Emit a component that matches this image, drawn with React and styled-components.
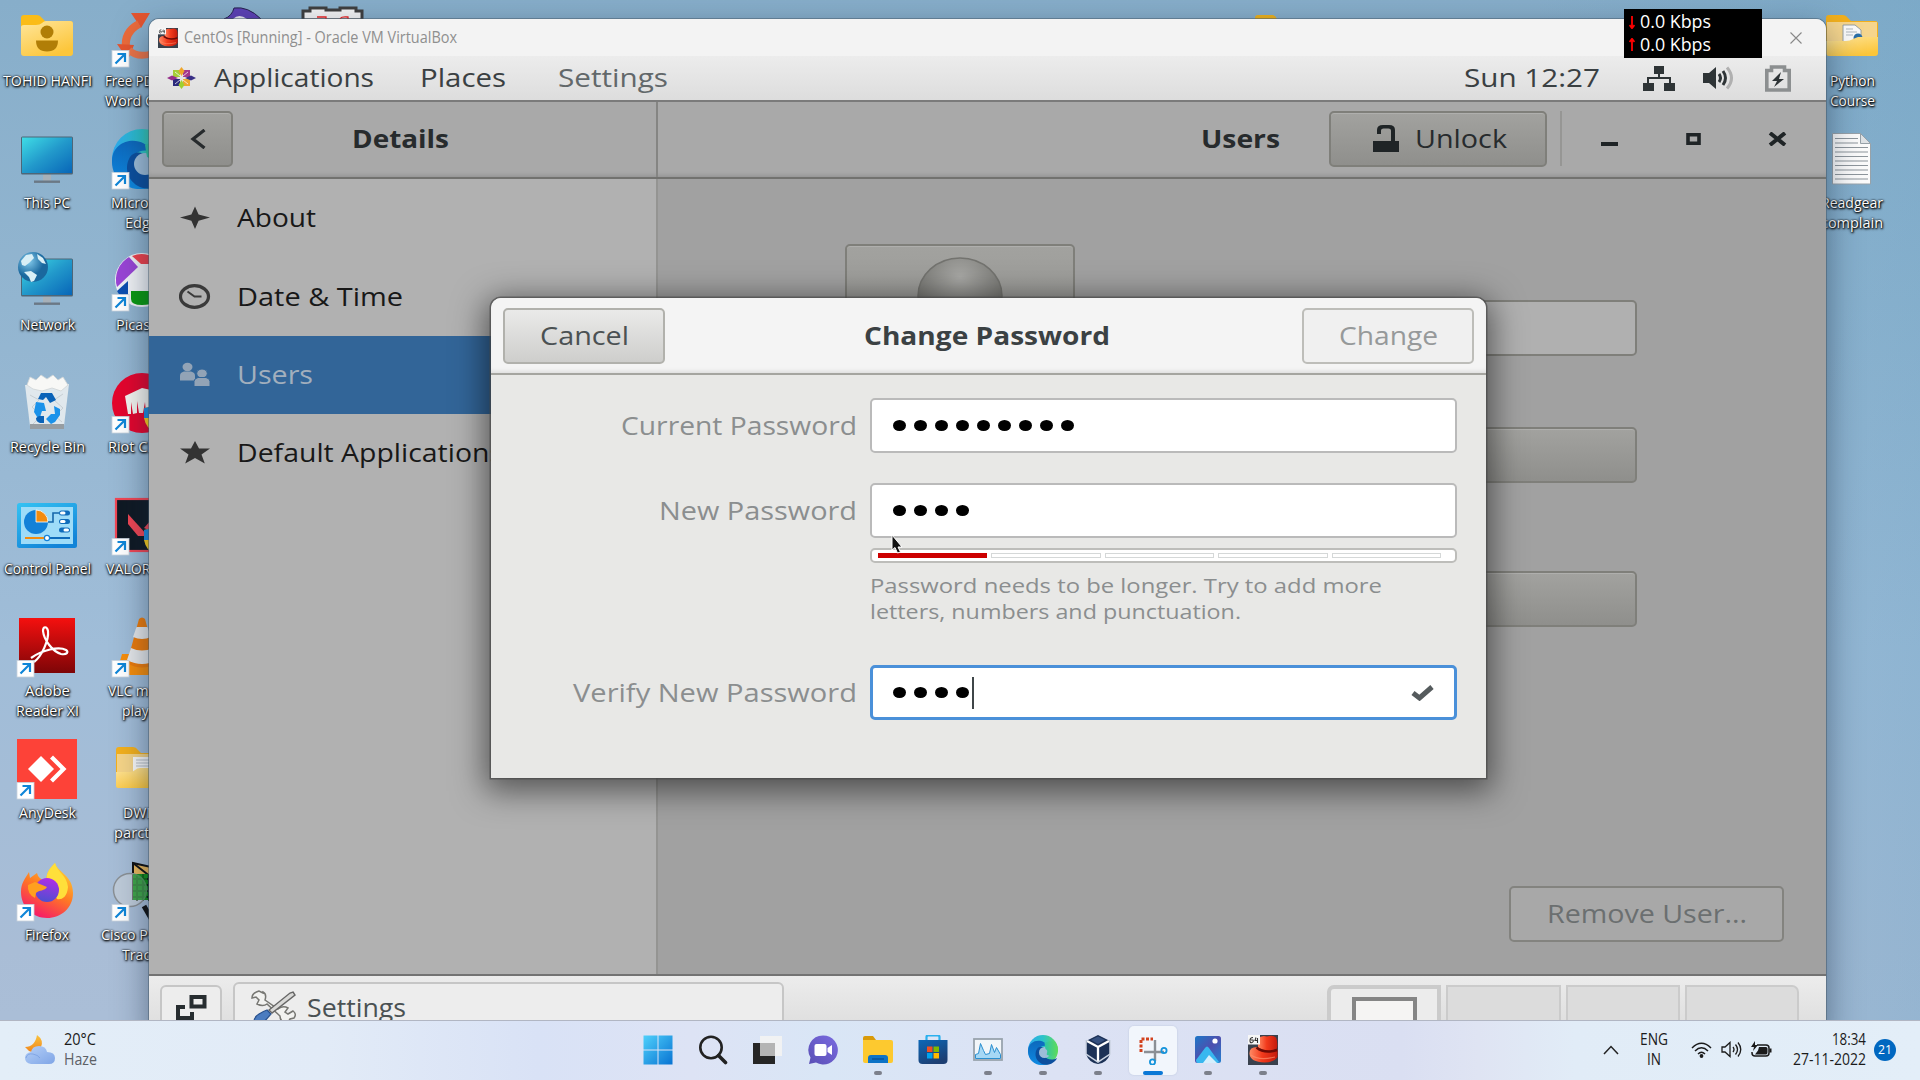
import React, { useLayoutEffect, useRef, useState } from "react";
import styled, { createGlobalStyle, css } from "styled-components";

const Global = createGlobalStyle`
  * { box-sizing: border-box; }
  body { margin: 0; overflow: hidden; font-family: "Open Sans", "Noto Sans", sans-serif; }
  svg { display: block; flex: none; }
`;

/* ---------- text fitted to a column width ---------- */
const FitBox = styled.span`
  display: block;
  flex: none;
  white-space: nowrap;
`;
const FitInner = styled.span`
  display: inline-block;
  transform-origin: 0 50%;
`;
function Fit({ w, dy = -1, children }) {
  const ref = useRef(null);
  const [natural, setNatural] = useState(0);
  useLayoutEffect(() => {
    const el = ref.current;
    const measure = () => {
      el.style.transform = "none";
      const width = el.getBoundingClientRect().width;
      el.style.transform = `translateY(${dy}px) scaleX(${w / width})`;
      setNatural(width);
    };
    measure();
    if (document.fonts && document.fonts.ready) document.fonts.ready.then(measure);
  }, [w, dy, children]);
  return (
    <FitBox style={{ width: w }}>
      <FitInner ref={ref} style={natural ? { transform: `translateY(${dy}px) scaleX(${w / natural})` } : undefined}>
        {children}
      </FitInner>
    </FitBox>
  );
}

/* ---------- desktop ---------- */
const Desktop = styled.div`
  position: relative;
  width: 1920px;
  height: 1080px;
  overflow: hidden;
  background:
    linear-gradient(90deg, rgba(110, 165, 200, 0) 0%, rgba(110, 165, 200, 0) 80%, rgba(96, 158, 194, 0.28) 100%),
    linear-gradient(180deg, #87aeca 0%, #92b5d0 28%, #a0bdd8 60%, #a9bdd6 88%, #abbfd8 100%);
`;
const IconColumn = styled.div`
  position: absolute;
  top: 0;
  left: ${(p) => p.$left}px;
  width: 94px;
  display: flex;
  flex-direction: column;
`;
const IconCell = styled.div`
  height: 122px;
  display: flex;
  flex-direction: column;
  align-items: ${(p) => (p.$start ? "flex-start" : "center")};
  flex: none;
`;
const IconLabel = styled.div`
  height: 20px;
  line-height: 20px;
  font-size: 15px;
  color: #fff;
  margin-left: ${(p) => p.$indent || 0}px;
  text-shadow: 0 0 2px #000, 1px 1px 2px #000, 0 1px 3px rgba(0, 0, 0, 0.8);
`;
const TopPeek = styled.div`
  position: absolute;
  top: 0;
  left: ${(p) => p.$left}px;
`;

const Shortcut = () => (
  <g>
    <rect x="17" y="50.5" width="17" height="16.5" fill="#fff" stroke="#c9d3dc" strokeWidth=".8" />
    <path d="M20.5 63.5l9-9M22.5 54h7.5v8" fill="none" stroke="#0f86d8" strokeWidth="2.2" />
  </g>
);
const Monitor = () => (
  <g>
    <path d="M43 52h8v7h-8z" fill="#a7b0b8" />
    <rect x="34" y="58.5" width="26" height="2.4" fill="#6b7885" />
    <rect x="21" y="14.5" width="52" height="38" rx="1.5" fill="#4d6678" />
    <rect x="22" y="15.5" width="50" height="35.5" fill="url(#screen)" />
  </g>
);
const EdgeMark = () => (
  <g>
    <circle cx="47" cy="37" r="30" fill="url(#edgeA)" />
    <path d="M17 38c1-22 31-26 40-8-13-5-22 4-20 15 2 13 14 18 22 19-18 9-43-2-42-26z" fill="url(#edgeB)" />
    <path d="M35 35c-6 10-3 24 10 30 12 5 26-2 30-12-10 6-22 3-25-5-4-7-1-10 1-13-3-6-12-6-16 0z" fill="#0c4f9e" />
    <circle cx="50" cy="42" r="11" fill="#9dbdd8" />
    <path d="M52 35c7 3 1 10 3 12 8 4 22 0 22-10 0-4-1-8-3-12-4-5-12-8-24-2z" fill="url(#edgeC)" />
  </g>
);
const FolderBack = ({ children }) => (
  <g>
    <path d="M21 18q0-3 3-3h14q3 0 5 3l3 3h24q3 0 3 3v28H21z" fill="#f3b01c" />
    {children}
  </g>
);
const shield = (
  <g>
    <path d="M49 42q8-1 12-5 4 4 12 5v10q-2 11-12 15-10-4-12-15z" fill="#ffd21e" />
    <path d="M49 42q8-1 12-5v15H49z" fill="#1d8de0" />
  </g>
);

const art = {
  user: (
    <g>
      <path d="M21 18q0-3 3-3h13q3 0 5 3l3 3h25q3 0 3 3v10H21z" fill="#fbbc17" />
      <path d="M21 27q0-2 3-2h12q4 0 6-2 2-2 4-2h24q3 0 3 3v29q0 3-3 3H24q-3 0-3-3z" fill="url(#folder)" />
      <circle cx="47" cy="32" r="6.5" fill="#b17e07" />
      <path d="M36 40.500h22q0 11-11 11t-11-11z" fill="#b17e07" />
    </g>
  ),
  pc: <Monitor />,
  net: (
    <g>
      <Monitor />
      <circle cx="33" cy="23" r="15" fill="url(#globe)" />
      <path d="M21 17l5-6 6-1 2 4-5 5-4 3-3-1zM24 28l7-1 6 4-3 6-3 1-2-5zM37 10l6 4 3 6-4-1-4-4z" fill="#d9eff6" />
    </g>
  ),
  bin: (
    <g>
      <path d="M25 19l44-1-5 42H30z" fill="#e8edf0" opacity=".9" />
      <path d="M27 19l3-8 6 3 5-5 6 4 6-4 5 5 5-3 5 8-7 6-9-3-10 3-9-2z" fill="#f8f8f6" stroke="#cfd4d6" strokeWidth=".8" />
      <path d="M30 29l9 5-7 7 9 9-8 8M63 28l-9 6 9 8-8 8 7 6" fill="none" stroke="#c7cfd4" strokeWidth="1" />
      <path d="M30 58h34v5H30z" fill="#969da2" />
      <path d="M41 27h11l4 7-6 3-4-6-3 3-5-1z" fill="#0a63b8" />
      <path d="M36 36l8 1 2 8-4 0-3 9-5-8z" fill="#1a92ea" />
      <path d="M54 40l6 3v6l-5 7-4 2-5-5 5-5 4 0z" fill="#1a92ea" />
      <path d="M39 50h5v7h-4q-4-1-4-5z" fill="#0a63b8" />
    </g>
  ),
  panel: (
    <g>
      <rect x="17" y="15" width="60" height="45" rx="2.500" fill="url(#cpBorder)" />
      <rect x="21" y="19" width="52" height="37" fill="#9edcf8" />
      <circle cx="36" cy="34" r="12" fill="#1381d8" />
      <path d="M36 34V22a12 12 0 0 1 12 12z" fill="#f28c0f" stroke="#fff" strokeWidth=".8" />
      <path d="M48 34h5v-9h6" fill="none" stroke="#1567aa" strokeWidth="1.600" />
      <rect x="59" y="22.500" width="11" height="5" rx="2.500" fill="#0e6cbb" />
      <rect x="59" y="31" width="11" height="5" rx="2.500" fill="#0e6cbb" />
      <rect x="59" y="39.500" width="11" height="5" rx="2.500" fill="#0e6cbb" />
      <rect x="60" y="23.500" width="5.500" height="3" rx="1.500" fill="#fff" /><rect x="60" y="32" width="5.500" height="3" rx="1.500" fill="#fff" /><rect x="63.500" y="40.500" width="5.500" height="3" rx="1.500" fill="#fff" />
      <path d="M25 50h22" stroke="#f28c0f" strokeWidth="2" /><path d="M47 50h23" stroke="#0e6cbb" strokeWidth="2" />
      <circle cx="47" cy="50" r="2.600" fill="#fff" stroke="#1381d8" strokeWidth="1.200" />
    </g>
  ),
  adobe: (
    <g>
      <rect x="19" y="8" width="56" height="55" fill="url(#adobe)" />
      <path d="M34 52c8-6 15-22 14-31-1-5-5-5-5 0 1 9 9 20 18 23 6 1 8-2 5-4-7-4-24 0-35 8" fill="none" stroke="#fff" strokeWidth="2.200" />
      <Shortcut />
    </g>
  ),
  anydesk: (
    <g>
      <rect x="17" y="7" width="60" height="60" fill="#fd4238" />
      <path d="M28 37l13-13 13 13-13 13z" fill="#fff" />
      <path d="M50 26.500l3-3 13.500 13.500L53 50.500l-3-3L60.500 37z" fill="#fff" />
      <Shortcut />
    </g>
  ),
  firefox: (
    <g>
      <path d="M47 28C45 20 50 14 55 9c2 9 18 12 18 30 0 15-12 25-26 25S21 53 21 38c0-9 4-13 8-20l1 6 7-5q1 6 10 9z" fill="url(#fox)" />
      <path d="M47 27C45 20 50 14 55 9c2 9 12 12 13 24-1 11-7 13-11 12z" fill="#ffdf3a" />
      <circle cx="47" cy="36" r="12" fill="url(#foxCore)" />
      <path d="M28 31l7-3 12 5c-2 4-8 3-11 6l-1 5q-8-4-7-13z" fill="#ffa01f" />
      <Shortcut />
    </g>
  ),
  pdf: (
    <g>
      <path d="M36 13h19l-9 15z" fill="#e5552f" />
      <path d="M44 24Q29 32 31 48" fill="none" stroke="#ec6b3b" strokeWidth="8" />
      <path d="M22 44l17 1-6 15z" fill="#e5552f" />
      <path d="M34 50q8 8 22 4" fill="none" stroke="#ec7448" strokeWidth="7" />
      <Shortcut />
    </g>
  ),
  edge: <g><EdgeMark /><Shortcut /></g>,
  picasa: (
    <g>
      <circle cx="47" cy="36" r="27" fill="#f1f3f6" />
      <path d="M22 43a26 26 0 0 1 12-30l9 10z" fill="#9a45d6" />
      <path d="M37 12a26 26 0 0 1 30 8H46z" fill="#f0414b" />
      <path d="M22 47l11-10v17q-8 0-11-7z" fill="#0c4fb0" />
      <path d="M36 47h34q-6 14-23 14-11 0-11-6z" fill="#0a9a10" />
      <Shortcut />
    </g>
  ),
  riot: (
    <g>
      <circle cx="47" cy="37" r="30" fill="#e5052d" />
      <path d="M30 30l17-8 18 4v18l-14 3-1-11-2 11h-4l-2-12 0 12-4 1-2-12 0 12-3 0z" fill="#f5f5f0" />
      {shield}
      <Shortcut />
    </g>
  ),
  valorant: (
    <g>
      <rect x="21" y="11" width="53" height="52" fill="#0f1923" stroke="#f04654" strokeWidth="2.200" />
      <path d="M33 26l20 22H43L33 36z" fill="#f04654" />
      <path d="M49 40l14-16v13l-7 6z" fill="#f04654" />
      {shield}
      <Shortcut />
    </g>
  ),
  vlc: (
    <g>
      <path d="M27 44h40l5 18q0 3-3 3H25q-3 0-3-3z" fill="#f68d0b" />
      <path d="M44 9q3-3 6 0l12 44q-15 9-30 0z" fill="#ec7b0a" />
      <path d="M41.500 17h11l3.500 10q-9 4-18 0zM36 38q11 5 22 0l4 12q-15 8-30 0z" fill="#e6e8ea" />
      <Shortcut />
    </g>
  ),
  dw: (
    <FolderBack>
      <path d="M22 22h50v30H22z" fill="#f5d487" />
      <path d="M38 25h26v20H38z" fill="#fafafa" /><path d="M41 28h20M41 31h20M41 34h20" stroke="#b9c0c6" strokeWidth="1" />
      <path d="M21 40h14q3 0 5-2 2-2 5-2h28v18q0 2-3 2H24q-3 0-3-2z" fill="url(#folder)" />
    </FolderBack>
  ),
  cisco: (
    <g>
      <path d="M38 9l36 8v28H38z" fill="#e9b75c" stroke="#111" strokeWidth="2" /><path d="M38 9l18 14" stroke="#111" strokeWidth="2" />
      <path d="M38 20h26v26H38z" fill="#0a7f12" /><path d="M42 20v27M48 20v27M54 20v27M38 25h20M38 31h20M38 37h20M38 43h20" stroke="#041f06" strokeWidth="2" />
      <circle cx="35" cy="36" r="17" fill="#d4d8da" opacity=".5" /><circle cx="35" cy="36" r="16.500" fill="none" stroke="#8a9095" strokeWidth="1.500" />
      <path d="M38 20h14v26H38z" fill="#18a322" opacity=".55" />
      <path d="M49 52l8 14" stroke="#111" strokeWidth="5" />
      <Shortcut />
    </g>
  ),
  python: (
    <FolderBack>
      <path d="M22 22h50v30H22z" fill="#f6d58c" />
      <path d="M38 25h12l6 5v12H38z" fill="#fafafa" stroke="#8d979e" strokeWidth=".9" /><path d="M41 29h7M41 32h11M41 35h7" stroke="#aeb7bd" strokeWidth="1" />
      <circle cx="53" cy="38" r="4.500" fill="#2c6fa8" />
      <path d="M21 41h20q4 0 7-2l5-2h20v16q0 3-3 3H24q-3 0-3-3z" fill="url(#folder)" />
    </FolderBack>
  ),
  doc: (
    <g>
      <path d="M27.500 11.500h28l10 10V62h-38z" fill="#fbfbfb" stroke="#98a2a9" strokeWidth="1" />
      <path d="M55.500 11.500v10h10z" fill="#dfe3e6" stroke="#98a2a9" strokeWidth="1" />
      <path d="M30 16.500h23M30 21h23M30 25.500h33M30 30h33M30 34.500h33M30 39h33M30 43.500h33M30 48h33M30 52.500h33M30 57h33" stroke="#8e969c" strokeWidth="1.100" />
    </g>
  ),
};
const Art = ({ name }) => (
  <svg width="94" height="71" viewBox="0 0 94 71">{art[name]}</svg>
);
const Defs = () => (
  <TopPeek $left={0}>
    <svg width="0" height="0">
      <defs>
        <linearGradient id="screen" x1="0" y1="0" x2="1" y2="1"><stop offset="0" stopColor="#3fdde6" /><stop offset=".5" stopColor="#2299cb" /><stop offset="1" stopColor="#0866b8" /></linearGradient>
        <linearGradient id="folder" x1="0" y1="0" x2=".6" y2="1"><stop offset="0" stopColor="#ffe69b" /><stop offset="1" stopColor="#fcc63b" /></linearGradient>
        <linearGradient id="cpBorder" x1="0" y1="0" x2=".6" y2="1"><stop offset="0" stopColor="#35c3f3" /><stop offset="1" stopColor="#1284d8" /></linearGradient>
        <linearGradient id="adobe" x1="0" y1="0" x2="0" y2="1"><stop offset="0" stopColor="#f5100f" /><stop offset="1" stopColor="#7d0507" /></linearGradient>
        <linearGradient id="fox" x1=".8" y1="0" x2=".3" y2="1"><stop offset="0" stopColor="#ffd936" /><stop offset=".5" stopColor="#ff7a23" /><stop offset="1" stopColor="#f5156c" /></linearGradient>
        <linearGradient id="foxCore" x1=".6" y1="0" x2=".4" y2="1"><stop offset="0" stopColor="#b02ee8" /><stop offset="1" stopColor="#4e4fd0" /></linearGradient>
        <radialGradient id="globe" cx=".35" cy=".3"><stop offset="0" stopColor="#86cdee" /><stop offset="1" stopColor="#1a689e" /></radialGradient>
        <linearGradient id="edgeA" x1="0" y1="0" x2="1" y2="0"><stop offset="0" stopColor="#2ea8ee" /><stop offset=".5" stopColor="#2cc3c9" /><stop offset="1" stopColor="#62dc57" /></linearGradient>
        <linearGradient id="edgeB" x1="0" y1="0" x2="0" y2="1"><stop offset="0" stopColor="#0d68bc" /><stop offset="1" stopColor="#0e8ae2" /></linearGradient>
        <linearGradient id="edgeC" x1="0" y1="0" x2="1" y2="0"><stop offset="0" stopColor="#2cc3a8" /><stop offset="1" stopColor="#5fdc5a" /></linearGradient>
        <linearGradient id="winLogo" x1="0" y1="0" x2="1" y2="1"><stop offset="0" stopColor="#4fd0fb" /><stop offset="1" stopColor="#0873d2" /></linearGradient>
        <linearGradient id="chat" x1="1" y1="0" x2="0" y2="1"><stop offset="0" stopColor="#7a6be0" /><stop offset="1" stopColor="#5a4fb5" /></linearGradient>
        <linearGradient id="store" x1="0" y1="0" x2=".5" y2="1"><stop offset="0" stopColor="#0c68b8" /><stop offset="1" stopColor="#1d3f73" /></linearGradient>
        <linearGradient id="photo" x1="0" y1="0" x2="1" y2="1"><stop offset="0" stopColor="#1c78c8" /><stop offset=".5" stopColor="#4e4fae" /><stop offset="1" stopColor="#2280d0" /></linearGradient>
        <linearGradient id="moon" x1="0" y1="0" x2="0" y2="1"><stop offset="0" stopColor="#f9c33d" /><stop offset="1" stopColor="#f0861e" /></linearGradient>
        <linearGradient id="cloud" x1="0" y1="0" x2="1" y2="1"><stop offset="0" stopColor="#b5d0f8" /><stop offset="1" stopColor="#7fa5e6" /></linearGradient>
        <radialGradient id="ball" cx=".5" cy=".25" r=".6"><stop offset="0" stopColor="#a8a8a5" /><stop offset="1" stopColor="#73736f" /></radialGradient>
        <linearGradient id="hat" x1="0" y1="0" x2="1" y2="0"><stop offset="0" stopColor="#ff8a64" /><stop offset=".45" stopColor="#f23a1c" /><stop offset="1" stopColor="#c41a0c" /></linearGradient>
      </defs>
    </svg>
  </TopPeek>
);

const firstColumn = [
  ["user", [["TOHID HANFI", 89]]],
  ["pc", [["This PC", 46]]],
  ["net", [["Network", 55]]],
  ["bin", [["Recycle Bin", 75]]],
  ["panel", [["Control Panel", 87]]],
  ["adobe", [["Adobe", 45], ["Reader XI", 63]]],
  ["anydesk", [["AnyDesk", 57]]],
  ["firefox", [["Firefox", 44]]],
];
const secondColumn = [
  ["pdf", [["Free PDF", 55, 10], ["Word C", 49, 10]]],
  ["edge", [["Microsoft", 63, 16], ["Edge", 33, 30]]],
  ["picasa", [["Picasa", 42, 21]]],
  ["riot", [["Riot Client", 69, 13]]],
  ["valorant", [["VALORANT", 72, 11]]],
  ["vlc", [["VLC media", 68, 13], ["player", 40, 27]]],
  ["dw", [["DWM", 36, 28], ["parctical", 58, 19]]],
  ["cisco", [["Cisco Packet", 82, 6], ["Tracer", 42, 27]]],
];
const lastColumn = [
  ["python", [["Python", 45], ["Course", 45]]],
  ["doc", [["Readgear", 62], ["complain", 62]]],
];
const Column = ({ left, items, start }) => (
  <IconColumn $left={left}>
    {items.map(([name, lines]) => (
      <IconCell key={name} $start={start}>
        <Art name={name} />
        {lines.map(([text, w, indent]) => (
          <IconLabel key={text} $indent={indent}><Fit w={w}>{text}</Fit></IconLabel>
        ))}
      </IconCell>
    ))}
  </IconColumn>
);

/* ---------- virtual machine window ---------- */
const VmWindow = styled.div`
  position: absolute;
  left: 149px;
  top: 19px;
  width: 1677px;
  height: 1020px;
  display: flex;
  flex-direction: column;
  border-radius: 10px 10px 0 0;
  overflow: hidden;
  background: #e6e6e6;
`;
const VmShadow = styled.div`
  position: absolute;
  left: 149px;
  top: 19px;
  width: 1677px;
  height: 1020px;
  border-radius: 10px 10px 0 0;
  box-shadow: 0 0 0 1px rgba(70, 90, 105, 0.5), 0 12px 34px rgba(20, 35, 60, 0.5);
`;
const TitleBar = styled.div`
  height: 37px;
  flex: none;
  display: flex;
  align-items: center;
  padding: 0 24px 0 9px;
  background: #f3f3f3;
  color: #8f8f8f;
  font-size: 15.5px;
  line-height: 37px;
`;
const TitleText = styled.div`
  margin-left: 6px;
  flex: 1;
`;
const HatIcon = ({ size }) => (
  <svg width={size} height={size} viewBox="0 0 30 30">
    <rect width="30" height="30" fill="#39414d" />
    <path d="M10 4Q13 0 19 1.500q6-2 9 1 2 4 1 11-9 5-19-1z" fill="url(#hat)" />
    <path d="M1.500 19Q1 12 9 12q8 5 20.500 2.500V22q-3 5-13 5.500Q2.500 27 1.500 19z" fill="url(#hat)" />
    <path d="M8.500 12.500q8 6.500 20.500 2.500" fill="none" stroke="#6d0a05" strokeWidth="2.400" />
    <path d="M3 20q8 6 24 2" fill="none" stroke="#ff8f6c" strokeWidth="1.200" opacity=".7" />
    <rect width="12" height="9.500" fill="#f7f7f7" />
    <path d="M5 2.500q-3 0-3 3t2 2 1-2.500H3M8 2.500L7 5.500h3M9.500 3v5" fill="none" stroke="#333" strokeWidth="1.100" />
  </svg>
);

const TopBar = styled.div`
  height: 46px;
  flex: none;
  display: flex;
  align-items: center;
  padding: 0 35px 0 18px;
  background: linear-gradient(#ececec, #dddddd);
  border-bottom: 2px solid #7b7b7b;
  font-size: 25px;
  line-height: 43px;
  color: #3a4042;
`;
const MenuItem = styled.div`
  margin-left: ${(p) => p.$gap}px;
  color: ${(p) => p.$color || "#3a4042"};
`;
const Spacer = styled.div`
  flex: 1;
`;
const Status = styled.div`
  display: flex;
  align-items: center;
  height: 44px;
`;
const StatusIcon = styled.div`
  margin-left: ${(p) => p.$gap}px;
`;

const HeaderBar = styled.div`
  height: 77px;
  flex: none;
  display: flex;
  background: #a9a9a9;
  border-bottom: 2px solid #72726f;
  box-shadow: inset 0 -4px 4px -2px rgba(0, 0, 0, 0.12);
  font-size: 25px;
  color: #272b2d;
`;
const HeaderSide = styled.div`
  width: 509px;
  display: flex;
  align-items: center;
  padding: 0 0 2px 13px;
  border-right: 2px solid #858583;
  gap: 119px;
`;
const HeaderMain = styled.div`
  flex: 1;
  display: flex;
  align-items: center;
  justify-content: flex-end;
  padding: 0 39px 2px 0;
`;
const Strong = styled.div`
  font-weight: 700;
`;
const dimButton = css`
  height: 56px;
  border: 2px solid #7f7f7a;
  border-radius: 5px;
  background: linear-gradient(#a2a29f, #8f8f8c);
  box-shadow: inset 0 1px 0 rgba(255, 255, 255, 0.15);
  display: flex;
  align-items: center;
`;
const BackButton = styled.div`
  ${dimButton}
  width: 71px;
  justify-content: center;
`;
const UnlockButton = styled.div`
  ${dimButton}
  width: 218px;
  margin-left: 49px;
  padding-left: 42px;
  gap: 16px;
`;
const Divider = styled.div`
  width: 2px;
  height: 55px;
  margin-left: 13px;
  background: #969694;
`;
const WindowButtons = styled.div`
  display: flex;
  align-items: center;
  margin-left: 38px;
  gap: 67px;
`;

const Body = styled.div`
  height: 797px;
  flex: none;
  display: flex;
  border-bottom: 2px solid #737373;
`;
const Sidebar = styled.div`
  width: 509px;
  flex: none;
  background: #b1b1b1;
  border-right: 2px solid #949492;
`;
const SideRow = styled.div`
  height: 78.4px;
  display: flex;
  align-items: center;
  padding-left: 30px;
  gap: 25px;
  overflow: hidden;
  font-size: 25px;
  color: ${(p) => (p.$active ? "#a2afbd" : "#181818")};
  background: ${(p) => (p.$active ? "#326598" : "transparent")};
`;
const Content = styled.div`
  flex: 1;
  display: flex;
  flex-direction: column;
  background: #a1a1a1;
`;
const Profile = styled.div`
  display: flex;
  justify-content: space-between;
  padding: 65px 189px 0 187px;
`;
const AvatarButton = styled.div`
  ${dimButton}
  width: 230px;
  height: 150px;
  align-items: flex-start;
  justify-content: center;
  padding-top: 10px;
`;
const Fields = styled.div`
  width: 480px;
  padding-top: 56px;
`;
const DimField = styled.div`
  ${dimButton}
  margin-bottom: ${(p) => p.$after}px;
  ${(p) => p.$entry && "background: #b0b0b0; box-shadow: none;"}
`;
const RemoveButton = styled.div`
  width: 275px;
  height: 56px;
  margin: auto 42px 32px auto;
  display: flex;
  align-items: center;
  justify-content: center;
  border: 2px solid #83837f;
  border-radius: 5px;
  background: #a8a8a8;
  color: #6b6f70;
  font-size: 25px;
`;

const Panel = styled.div`
  height: 64px;
  flex: none;
  display: flex;
  align-items: flex-start;
  padding: 6px 27px 0 11px;
  background: linear-gradient(#ececec, #e0e0e0 44px);
`;
const PanelButton = styled.div`
  height: 56px;
  width: ${(p) => p.$width}px;
  margin: ${(p) => p.$top}px 11px 0 0;
  display: flex;
  align-items: flex-start;
  gap: 11px;
  padding: ${(p) => p.$pad};
  border: 2px solid #c6c6c6;
  border-radius: 6px;
  background: #ededed;
  font-size: 25px;
  line-height: 36px;
  color: #4a5153;
`;
const Workspaces = styled.div`
  display: flex;
  gap: 5px;
  margin: 3px 0 0 auto;
`;
const Workspace = styled.div`
  width: 114.200px;
  height: 56px;
  display: flex;
  justify-content: center;
  padding-top: 8px;
  background: ${(p) => (p.$active ? "#ececec" : "#dcdcdc")};
  border: ${(p) => (p.$active ? 4 : 2)}px solid #cbcbcb;
  border-radius: ${(p) => p.$radius || 0};
`;
const MiniWindow = styled.div`
  width: 65px;
  height: 28px;
  background: #f5f4f3;
  border: 4px solid #858585;
`;

/* ---------- dialog ---------- */
const Dialog = styled.div`
  position: absolute;
  left: 491px;
  top: 298px;
  width: 995px;
  height: 480px;
  border-radius: 10px 10px 0 0;
  background: #e8e8e6;
  box-shadow: 0 0 0 1.5px rgba(70, 70, 70, 0.65), 0 7px 32px 6px rgba(0, 0, 0, 0.52);
  color: #8b8e8f;
  font-size: 25px;
`;
const DialogHeader = styled.div`
  height: 77px;
  display: flex;
  align-items: center;
  justify-content: space-between;
  padding: 0 12px 0 12px;
  background: #f4f4f4;
  border-bottom: 2px solid #a5a5a0;
  border-radius: 10px 10px 0 0;
  box-shadow: inset 0 -4px 4px -2px rgba(0, 0, 0, 0.09);
  color: #3b4143;
`;
const DialogButton = styled.div`
  width: ${(p) => p.$width}px;
  height: 56px;
  display: flex;
  align-items: center;
  justify-content: center;
  border: 2px solid ${(p) => (p.$off ? "#bdbdb9" : "#b1b1ac")};
  border-radius: 5px;
  background: ${(p) => (p.$off ? "#f0f0f0" : "linear-gradient(#eaeae9, #cececc)")};
  color: ${(p) => (p.$off ? "#96999a" : "#4b5153")};
`;
const DialogTitle = styled(Strong)`
  margin-left: 6px;
`;
const Form = styled.div`
  padding: 23px 29px 0 82px;
`;
const FormRow = styled.div`
  display: flex;
  justify-content: flex-end;
  align-items: center;
  gap: 13px;
  margin-bottom: ${(p) => p.$after}px;
`;
const Entry = styled.div`
  width: 587px;
  height: 55px;
  display: flex;
  align-items: center;
  justify-content: space-between;
  padding: 0 18px 0 ${(p) => (p.$focus ? 20 : 21)}px;
  background: #fff;
  border: ${(p) => (p.$focus ? 3 : 2)}px solid ${(p) => (p.$focus ? "#4a90d9" : "#bababa")};
  border-radius: 5px;
`;
const Dots = styled.div`
  display: flex;
  align-items: center;
  gap: 8px;
`;
const Dot = styled.div`
  width: 13px;
  height: 11px;
  border-radius: 50%;
  background: #000;
`;
const Caret = styled.div`
  width: 2px;
  height: 32px;
  margin-left: -5px;
  background: #3f4648;
`;
const Strength = styled.div`
  width: 587px;
  height: 15px;
  margin: 10px 0 0 auto;
  display: flex;
  align-items: center;
  gap: 4px;
  padding: 0 14px 0 6px;
  background: #fff;
  border: 2px solid #bdbdba;
  border-radius: 5px;
`;
const Segment = styled.div`
  flex: 1;
  height: 5px;
  background: ${(p) => (p.$on ? "#cc0000" : "#fff")};
  border: 1px solid ${(p) => (p.$on ? "#cc0000" : "#d5d8d8")};
`;
const Hint = styled.div`
  width: 587px;
  height: 52px;
  margin: 10px 0 40px auto;
  font-size: 20px;
  line-height: 26px;
`;
const Cursor = styled.div`
  position: absolute;
  left: 891px;
  top: 534px;
`;
const SpeedMeter = styled.div`
  position: absolute;
  left: 1624px;
  top: 9px;
  width: 138px;
  height: 49px;
  padding: 2px 0 0 5px;
  background: #000;
  color: #fff;
  font-size: 19px;
`;
const SpeedRow = styled.div`
  height: 22.500px;
  line-height: 22.500px;
  display: flex;
  align-items: center;
  gap: 5px;
`;

/* ---------- taskbar ---------- */
const Taskbar = styled.div`
  position: absolute;
  left: 0;
  bottom: 0;
  width: 1920px;
  height: 60px;
  display: flex;
  align-items: center;
  border-top: 1px solid #b1b6c3;
  padding-bottom: 2px;
  background: linear-gradient(90deg, #e3eef8 0%, #e2ebf7 17%, #d9e2f6 28%, #dde3f5 36%, #d9e6f6 43%, #dce2f4 55%, #dadff2 73%, #dfe4f3 77%, #e1ecf7 82%, #e3eef8 100%);
  color: #1b1b1b;
  font-size: 15.500px;
`;
const Weather = styled.div`
  width: 630px;
  display: flex;
  align-items: center;
  padding-left: 24px;
  gap: 9px;
`;
const Lines = styled.div`
  display: flex;
  flex-direction: column;
  align-items: ${(p) => p.$align || "flex-start"};
  line-height: 20px;
`;
const Muted = styled.div`
  color: #5c6066;
`;
const Apps = styled.div`
  display: flex;
`;
const AppCell = styled.div`
  width: 55px;
  height: 58px;
  padding-top: 3px;
  display: flex;
  justify-content: center;
`;
const AppTile = styled.div`
  width: 48px;
  height: 49px;
  margin-top: 2px;
  display: flex;
  flex-direction: column;
  align-items: center;
  justify-content: space-between;
  padding-top: 9px;
  border-radius: 5px;
  background: ${(p) => (p.$active ? "rgba(246,249,253,.85)" : "transparent")};
  box-shadow: ${(p) => (p.$active ? "0 0 1px 1px rgba(190,200,220,.35)" : "none")};
`;
const Running = styled.div`
  width: ${(p) => (p.$active ? 20 : 8)}px;
  height: 4px;
  border-radius: 2px;
  background: ${(p) => (p.$active ? "#0b78d6" : "#7c808b")};
`;
const Tray = styled.div`
  flex: 1;
  display: flex;
  align-items: center;
  justify-content: flex-end;
  padding-right: 24px;
`;
const TrayItem = styled.div`
  margin-right: ${(p) => p.$gap}px;
`;
const Badge = styled.div`
  width: 22px;
  height: 22px;
  border-radius: 50%;
  display: flex;
  align-items: center;
  justify-content: center;
  background: #0067c0;
  color: #fff;
  font-size: 13px;
`;

const appArt = {
  start: <g fill="url(#winLogo)"><path d="M0.500 0.500h14v14h-14zM15.500 0.500h14v14h-14zM0.500 15.500h14v14h-14zM15.500 15.500h14v14h-14z" /></g>,
  search: <g fill="none" stroke="#222"><circle cx="13" cy="12.500" r="10.700" strokeWidth="2.600" /><path d="M20.500 20.500l7 7" strokeWidth="3.600" strokeLinecap="round" /></g>,
  tasks: <g><rect x="0" y="8" width="22" height="21" fill="#262626" /><rect x="7" y="1" width="22" height="20" fill="#f3f3f3" opacity=".9" /><path d="M7 8h15v13H7z" fill="#b4b4b4" /></g>,
  chat: <g><path d="M15 0.500a14.500 14.500 0 1 1-7 27L1 29l1.500-6.500A14.500 14.500 0 0 1 15 .5z" fill="url(#chat)" /><rect x="6.500" y="9" width="12" height="12" rx="2" fill="#fff" /><path d="M19.500 13l4.500-3v10l-4.500-3z" fill="#fff" /></g>,
  files: <g><path d="M0 3q0-2 2-2h8l3 4H0z" fill="#d99a08" /><path d="M0 5h28q2 0 2 2v19q0 2-2 2H2q-2 0-2-2z" fill="#fdc92f" /><path d="M5 28v-5q0-3 3-3h14q3 0 3 3v5z" fill="#0d73c6" /><path d="M9 24h12" stroke="#07529a" strokeWidth="1.500" /></g>,
  store: <g><path d="M8.500 6V2q0-1.500 1.500-1.500h10q1.500 0 1.500 1.500v4" fill="none" stroke="#2ab0ee" strokeWidth="2.200" /><path d="M.5 5h29v20q0 4-4 4h-21q-4 0-4-4z" fill="url(#store)" /><path d="M9 11.500h5.500V17H9z" fill="#f25022" /><path d="M15.500 11.500H21V17h-5.500z" fill="#7fba00" /><path d="M9 18h5.500v5.500H9z" fill="#00a4ef" /><path d="M15.500 18H21v5.500h-5.500z" fill="#ffb900" /></g>,
  perf: <g><rect x="1" y="4" width="28" height="21" fill="#f2f6f9" stroke="#98a3ad" strokeWidth="1.800" /><path d="M2.500 23.500v-4l3-1 2-10 3 7 2 4 4-1 2-9 3 8 2-5 4 7v4z" fill="#a6d8f5" stroke="#2a8fd0" strokeWidth="1" /></g>,
  edge: <g transform="translate(-8.500 -3.500) scale(.5)"><EdgeMark /></g>,
  vbox: <g><path d="M15 0l12 6v13q-3 9-12 10Q6 28 3 19V6z" fill="#1c3156" /><path d="M4 6l11 6 11-6M15 12v15" fill="none" stroke="#fff" strokeWidth="2.300" /><path d="M3 5v14l12 8 12-8V5" fill="none" stroke="#cbd4e2" strokeWidth="1.500" /><path d="M8 5l7-3.500L22 5l-7 4z" fill="#35507f" /></g>,
  snip: <g fill="none"><path d="M3 17V4h12" stroke="#d2421e" strokeWidth="3" strokeDasharray="3 1.500" /><path d="M17 5v21M6 17h20" stroke="#8b8f95" strokeWidth="2.400" /><circle cx="26" cy="15.500" r="2.600" stroke="#1593db" strokeWidth="1.800" /><circle cx="14.500" cy="27" r="2.600" stroke="#1593db" strokeWidth="1.800" /></g>,
  photos: <g><rect x="2" y="1" width="26" height="27" rx="2.500" fill="url(#photo)" /><path d="M3 25l9-12q2-3 4 0l10 14q-1 1-2 1H5q-2 0-2-3z" fill="#38b7ef" /><path d="M10 28l6-8 8 8z" fill="#d5effc" /><circle cx="22" cy="6" r="2.600" fill="#fff" /></g>,
};
const apps = [
  ["start"], ["search"], ["tasks"], ["chat"], ["files", 1], ["store"], ["perf", 1], ["edge", 1], ["vbox", 1], ["snip", 2], ["photos", 1], ["hat", 1],
];

const Password = ({ count, caret }) => (
  <Dots>
    {Array.from({ length: count }, (_, i) => <Dot key={i} />)}
    {caret && <Caret />}
  </Dots>
);
const SpeedArrow = ({ up }) => (
  <svg width="6" height="13" viewBox="0 0 6 13">
    <path d={up ? "M3 13V2M.5 4L3 .8 5.500 4" : "M3 0v11M.5 9L3 12.200 5.500 9"} stroke="#f00" strokeWidth="1.800" fill="none" />
  </svg>
);

const sideIcons = {
  about: <path d="M16 3.500l3.600 7.900L31 14.500l-11.400 3.200L16 26l-3.600-8.300L1 14.500l11.400-3.100z" fill="#333" />,
  clock: <g fill="none" stroke="#3a3a3a"><ellipse cx="15.500" cy="14.500" rx="14" ry="10.800" strokeWidth="3.200" /><path d="M8.500 9.500l7 5h7" strokeWidth="2" /></g>,
  users: <g fill="#92a3b6"><ellipse cx="8.500" cy="7" rx="5" ry="4.200" /><path d="M1 20.500v-5q0-3 4-4h7q4 1 4 4v5z" /><g stroke="#326598" strokeWidth="1"><ellipse cx="23" cy="13.500" rx="5.300" ry="4.500" /><path d="M15 26.500v-5q0-3 4-4h8q4 1 4 4v5z" /></g></g>,
  star: <path d="M16 3l4 7.500h11l-8.500 6 3.300 9L16 20l-9.800 5.500 3.300-9-8.500-6h11z" fill="#333" />,
};
const sideRows = [
  ["about", "About", 79],
  ["clock", "Date & Time", 166],
  ["users", "Users", 76],
  ["star", "Default Applications", 266],
];

export default function App() {
  return (
    <Desktop>
      <Global />
      <Defs />
      <Column left={0} items={firstColumn} />
      <Column left={95} items={secondColumn} start />
      <Column left={1805} items={lastColumn} />
      <TopPeek $left={222}>
        <svg width="145" height="24" viewBox="0 0 145 24">
          <path d="M2 19q8-3 10-11 14-2 27 11z" fill="#5d41b5" stroke="#26204d" strokeWidth="1" /><path d="M11 19q6-6 14 0z" fill="#e7e7ef" />
          <path d="M81 20v-9h7V8h16v2h14V8h16v3h6v9z" fill="#f5f5f5" stroke="#3f3f3f" strokeWidth="3" /><path d="M95 17h9v3M118 20q0-4 8-3v3" fill="none" stroke="#e22" strokeWidth="1.300" />
        </svg>
      </TopPeek>
      <TopPeek $left={1255}>
        <svg width="24" height="24" viewBox="0 0 24 24"><path d="M0 24v-6q0-3 3-3h15q3 1 4 4v5z" fill="#efb21a" /></svg>
      </TopPeek>

      <VmShadow />
      <VmWindow>
        <TitleBar>
          <HatIcon size={20} />
          <TitleText><Fit w={273} dy={0}>CentOs [Running] - Oracle VM VirtualBox</Fit></TitleText>
          <svg width="12" height="12" viewBox="0 0 12 12"><path d="M.5.5l11 11M11.500.5l-11 11" stroke="#888" strokeWidth="1.100" /></svg>
        </TitleBar>

        <TopBar>
          <svg width="29" height="22" viewBox="0 0 29 22">
            <path d="M6 3h7v7H6z" fill="#a5cd39" /><path d="M16 3h7v7h-7z" fill="#a4388c" /><path d="M6 12h7v7H6z" fill="#2b2a7c" /><path d="M16 12h7v7h-7z" fill="#efa72e" />
            <path d="M14.500 0l3 4-3 5-3-5z" fill="#f0a62b" /><path d="M0 11l5-2.500 6 2.500-6 2.500z" fill="#962f8a" /><path d="M29 11l-5-2.500-6 2.500 6 2.500z" fill="#3a2f86" /><path d="M14.500 22l3-4-3-5-3 5z" fill="#9fd02f" />
            <path d="M8 5l5 4M21 5l-5 4M8 17l5-4M21 17l-5-4" stroke="#fff" strokeWidth=".9" opacity=".8" />
          </svg>
          <MenuItem $gap={18}><Fit w={160}>Applications</Fit></MenuItem>
          <MenuItem $gap={46}><Fit w={86}>Places</Fit></MenuItem>
          <MenuItem $gap={52} $color="#62686a"><Fit w={110}>Settings</Fit></MenuItem>
          <Spacer />
          <Status>
            <Fit w={136}>Sun 12:27</Fit>
            <StatusIcon $gap={43}>
              <svg width="32" height="25" viewBox="0 0 32 25"><path d="M11 0h10v8H11zM0 17h11v8H0zM21 17h11v8H21z" fill="#2e3436" /><path d="M16 8v5M5 18v-6h22v6" fill="none" stroke="#2e3436" strokeWidth="2" /></svg>
            </StatusIcon>
            <StatusIcon $gap={28}>
              <svg width="32" height="24" viewBox="0 0 32 24"><path d="M0 7h6l7-6v22l-7-6H0z" fill="#2e3436" /><path d="M16 8q3 4 0 8M20 5q5 7 0 14" fill="none" stroke="#2e3436" strokeWidth="3" /><path d="M24 1.500q9 10.500 0 21" fill="none" stroke="#b0b0b0" strokeWidth="3" /></svg>
            </StatusIcon>
            <StatusIcon $gap={30}>
              <svg width="26" height="27" viewBox="0 0 26 27"><path d="M1.800 5.500h4.700V2h13v3.500h4.700V25H1.800z" fill="none" stroke="#8c8f90" strokeWidth="3.600" /><path d="M16 7l-9 9h5l-3 6 10-8h-5z" fill="#2e3436" /></svg>
            </StatusIcon>
          </Status>
        </TopBar>

        <HeaderBar>
          <HeaderSide>
            <BackButton>
              <svg width="16" height="20" viewBox="0 0 16 20"><path d="M14.500 1L3 10l11.500 9" fill="none" stroke="#272b2d" strokeWidth="3.200" /></svg>
            </BackButton>
            <Strong><Fit w={97}>Details</Fit></Strong>
          </HeaderSide>
          <HeaderMain>
            <Strong><Fit w={79}>Users</Fit></Strong>
            <UnlockButton>
              <svg width="26" height="27" viewBox="0 0 26 27"><path d="M0 16h26v11H0zM18 16V5.500Q18 3.500 15.500 3.500h-5Q8 3.500 8 5.500V9H4V5q0-5 6-5h6q6 0 6 5v11z" fill="#1f2426" /></svg>
              <Fit w={92}>Unlock</Fit>
            </UnlockButton>
            <Divider />
            <WindowButtons>
              <svg width="19" height="14" viewBox="0 0 19 14"><path d="M1 10h17v4H1z" fill="#1f2426" /></svg>
              <svg width="15" height="12" viewBox="0 0 15 12"><path d="M2 1.800h11v8.400H2z" fill="none" stroke="#1f2426" strokeWidth="3.600" /></svg>
              <svg width="19" height="14" viewBox="0 0 19 14"><path d="M2 1l15 12M17 1L2 13" stroke="#1f2426" strokeWidth="4" /></svg>
            </WindowButtons>
          </HeaderMain>
        </HeaderBar>

        <Body>
          <Sidebar>
            {sideRows.map(([icon, text, w]) => (
              <SideRow key={icon} $active={icon === "users"}>
                <svg width="33" height="30" viewBox="0 0 33 30">{sideIcons[icon]}</svg>
                <Fit w={w} dy={-1.5}>{text}</Fit>
              </SideRow>
            ))}
          </Sidebar>
          <Content>
            <Profile>
              <AvatarButton>
                <svg width="90" height="90" viewBox="0 0 90 90"><ellipse cx="45" cy="40" rx="42" ry="38" fill="url(#ball)" stroke="#73736f" strokeWidth="1.500" /></svg>
              </AvatarButton>
              <Fields>
                <DimField $entry $after={71} />
                <DimField $after={88} />
                <DimField />
              </Fields>
            </Profile>
            <RemoveButton><Fit w={200}>Remove User...</Fit></RemoveButton>
          </Content>
        </Body>

        <Panel>
          <PanelButton $width={62} $top={3} $pad="8px 0 0 14px">
            <svg width="31" height="25" viewBox="0 0 31 25"><path d="M15.500 2h13v9.500h-13z" fill="none" stroke="#272d30" strokeWidth="4" /><path d="M9 12H2v11h14v-6" fill="none" stroke="#272d30" strokeWidth="4" /></svg>
          </PanelButton>
          <PanelButton $width={551} $top={0} $pad="6px 0 0 16px">
            <svg width="45" height="34" viewBox="0 0 45 34">
              <path d="M12 3L8 1Q1 3 1 8l4-1 3 3-2 4q6 3 10 0l13 12q0 6 7 8l3-5 4-1q3-4-1-7l-5 3-3-2 3-4q-5-3-10 1L14 10q2-6-2-8z" fill="#f2f2f0" stroke="#777773" strokeWidth="1.500" />
              <path d="M42 2l2 3-23 18-3-3 21-17z" fill="#d9d9d7" stroke="#666" strokeWidth="1.400" />
              <path d="M16 20l4 4-7 8q-6 5-10 0 0-5 5-8 5-3 8-4z" fill="#4b7cc0" stroke="#28518e" strokeWidth="1.200" />
            </svg>
            <Fit w={99}>Settings</Fit>
          </PanelButton>
          <Workspaces>
            <Workspace $active $radius="7px 0 0 0"><MiniWindow /></Workspace>
            <Workspace />
            <Workspace />
            <Workspace $radius="0 7px 0 0" />
          </Workspaces>
        </Panel>
      </VmWindow>

      <Dialog>
        <DialogHeader>
          <DialogButton $width={162}><Fit w={89}>Cancel</Fit></DialogButton>
          <DialogTitle><Fit w={246}>Change Password</Fit></DialogTitle>
          <DialogButton $width={172} $off><Fit w={99}>Change</Fit></DialogButton>
        </DialogHeader>
        <Form>
          <FormRow $after={30}>
            <Fit w={236}>Current Password</Fit>
            <Entry><Password count={9} /></Entry>
          </FormRow>
          <FormRow $after={0}>
            <Fit w={198}>New Password</Fit>
            <Entry><Password count={4} /></Entry>
          </FormRow>
          <Strength>
            <Segment $on /><Segment /><Segment /><Segment /><Segment />
          </Strength>
          <Hint>
            <Fit w={512} dy={0}>Password needs to be longer. Try to add more</Fit>
            <Fit w={371} dy={0}>letters, numbers and punctuation.</Fit>
          </Hint>
          <FormRow $after={0}>
            <Fit w={284}>Verify New Password</Fit>
            <Entry $focus>
              <Password count={4} caret />
              <svg width="26" height="16" viewBox="0 0 26 16"><path d="M3 8l6.500 5L22 2" fill="none" stroke="#555b5d" strokeWidth="5" /></svg>
            </Entry>
          </FormRow>
        </Form>
      </Dialog>
      <Cursor>
        <svg width="13" height="20" viewBox="0 0 13 20"><path d="M1 1v15l3-2.500 2.500 5.500 3-1-2.500-5h4z" fill="#111" stroke="#fff" strokeWidth="1" /></svg>
      </Cursor>

      <SpeedMeter>
        <SpeedRow><SpeedArrow /><Fit w={71}>0.0 Kbps</Fit></SpeedRow>
        <SpeedRow><SpeedArrow up /><Fit w={71}>0.0 Kbps</Fit></SpeedRow>
      </SpeedMeter>

      <Taskbar>
        <Weather>
          <svg width="31" height="30" viewBox="0 0 31 30">
            <path d="M13 0q7 5 4 12-5 7-12 4L1 12q10 0 12-12z" fill="url(#moon)" />
            <path d="M7 29q-6-1-6-6t6-6q1-6 8-6t8 6q8 0 8 6t-6 6z" fill="url(#cloud)" />
            <path d="M2 23q1-5 7-4 5 1 7 4" fill="none" stroke="#6d95dc" strokeWidth="1" opacity=".6" />
          </svg>
          <Lines>
            <Fit w={32}>20°C</Fit>
            <Muted><Fit w={33}>Haze</Fit></Muted>
          </Lines>
        </Weather>
        <Apps>
          {apps.map(([name, state]) => (
            <AppCell key={name}>
              <AppTile $active={state === 2}>
                {name === "hat" ? <HatIcon size={30} /> : <svg width="30" height="30" viewBox="0 0 30 30">{appArt[name]}</svg>}
                {state && <Running $active={state === 2} />}
              </AppTile>
            </AppCell>
          ))}
        </Apps>
        <Tray>
          <TrayItem $gap={21}><svg width="16" height="10" viewBox="0 0 16 10"><path d="M1 9l7-7.500L15 9" fill="none" stroke="#222" strokeWidth="1.500" /></svg></TrayItem>
          <TrayItem $gap={23}>
            <Lines $align="center"><Fit w={28}>ENG</Fit><Fit w={14}>IN</Fit></Lines>
          </TrayItem>
          <TrayItem $gap={9}>
            <svg width="21" height="16" viewBox="0 0 21 16"><g fill="none" stroke="#1b1b1b" strokeWidth="1.500"><path d="M1 6q9.500-9.500 19 0M4 9q6.500-6.500 13 0M7 12q3.500-3.500 7 0" /></g><circle cx="10.500" cy="14" r="1.900" fill="#1b1b1b" /></svg>
          </TrayItem>
          <TrayItem $gap={9}>
            <svg width="21" height="17" viewBox="0 0 21 17"><g fill="none" stroke="#1b1b1b" strokeWidth="1.300"><path d="M1 6h3l5-4.500v14L4 11H1zM12 6q2 2.500 0 5M14.500 3.500q4 5 0 10M17 1.500q5.500 7 0 14" /></g></svg>
          </TrayItem>
          <TrayItem $gap={21}>
            <svg width="21" height="17" viewBox="0 0 21 17"><path d="M6 4h9q3 0 3 3v5q0 3-3 3H4q-3 0-3-3v-1" fill="none" stroke="#1b1b1b" strokeWidth="1.500" /><path d="M8 6h7q1.500 0 1.500 1.500v4q0 2-1.500 2H4l3-4zM18.500 7.500h2v4h-2z" fill="#1b1b1b" /><path d="M4 0L0 6h3l-1 4 5-6H4z" fill="#1b1b1b" /></svg>
          </TrayItem>
          <TrayItem $gap={8}>
            <Lines $align="flex-end"><Fit w={34}>18:34</Fit><Fit w={73}>27-11-2022</Fit></Lines>
          </TrayItem>
          <Badge><Fit w={14}>21</Fit></Badge>
        </Tray>
      </Taskbar>
    </Desktop>
  );
}
